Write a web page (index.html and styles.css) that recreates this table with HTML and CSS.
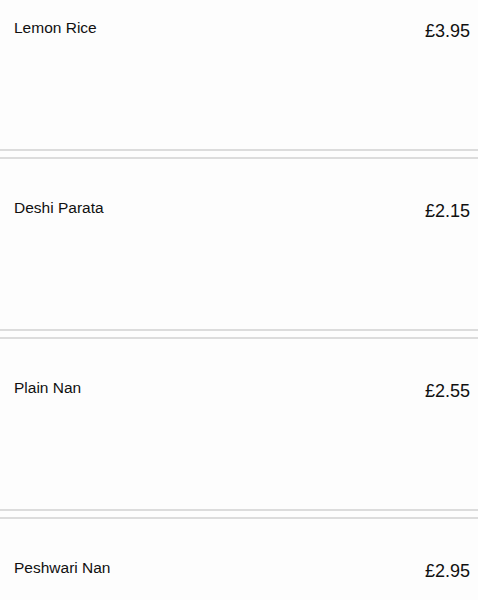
FILE: index.html
```html
<!DOCTYPE html>
<html lang="en">
<head>
<meta charset="utf-8">
<title>Menu</title>
<link rel="stylesheet" href="styles.css">
</head>
<body>
<ul class="menu">
  <li class="item">
    <span class="name">Lemon Rice</span>
    <span class="price">£3.95</span>
  </li>
  <li class="item">
    <span class="name">Deshi Parata</span>
    <span class="price">£2.15</span>
  </li>
  <li class="item">
    <span class="name">Plain Nan</span>
    <span class="price">£2.55</span>
  </li>
  <li class="item">
    <span class="name">Peshwari Nan</span>
    <span class="price">£2.95</span>
  </li>
</ul>
</body>
</html>
```
FILE: styles.css
```css
html, body {
  margin: 0;
  padding: 0;
  background: #fdfdfd;
}

body {
  font-family: "Liberation Sans", Arial, Helvetica, sans-serif;
  color: #111;
}

.menu {
  list-style: none;
  margin: 0;
  padding: 0;
}

.item {
  display: flex;
  justify-content: space-between;
  align-items: flex-start;
  box-sizing: border-box;
  height: 174px;
  margin-bottom: 6px;
  padding: 40px 8px 0 14px;
  border-top: 2px solid #dcdcdc;
  border-bottom: 2px solid #dcdcdc;
}

.item:first-child {
  height: 151px;
  padding-top: 19px;
  border-top: none;
}

.name {
  font-size: 15.5px;
  line-height: 18px;
}

.price {
  font-size: 18px;
  line-height: 22px;
  margin-top: 1px;
}
```
